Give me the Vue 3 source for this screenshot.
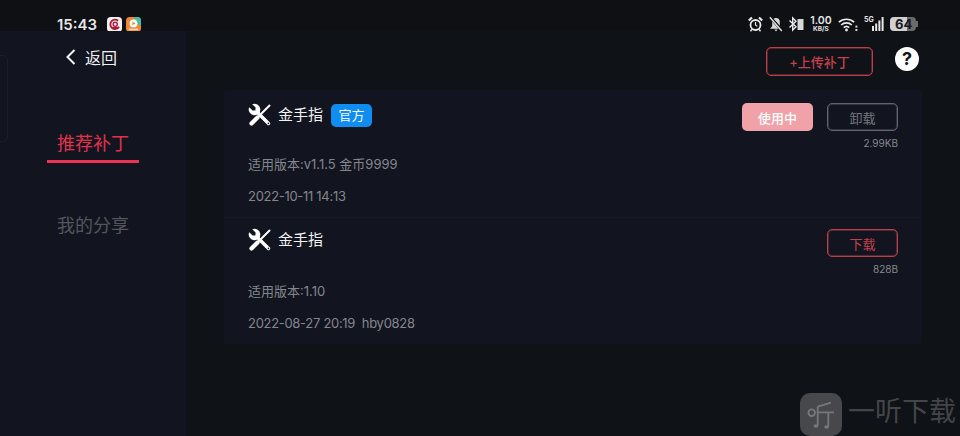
<template>
  <div class="screen">
    <header class="status-bar">
      <span class="clock">15:43</span>
      <svg class="app-icon" viewBox="0 0 16 16">
        <rect width="16" height="16" rx="4" fill="#f6eef0" />
        <path d="M11.800 4A5 5 0 1 0 12.800 10.500" fill="none" stroke="#a81c3c" stroke-width="2" />
        <circle cx="8.800" cy="7.800" r="2.200" fill="none" stroke="#a81c3c" stroke-width="1.500" />
        <path d="M5 11.200h6" stroke="#a81c3c" stroke-width="1.300" />
      </svg>
      <svg class="app-icon second" viewBox="0 0 16 16">
        <rect width="16" height="16" rx="4" fill="#ef8736" />
        <path d="M9 0h3a4 4 0 0 1 4 4v6L9 4z" fill="#3fbfa4" />
        <circle cx="8" cy="6.800" r="4.200" fill="#fff" />
        <path d="M6.800 4.800l3.400 2-3.400 2z" fill="#ef8736" />
        <rect x="3" y="12.400" width="10" height="1.800" fill="#fcd9b4" />
      </svg>
      <div class="status-right">
        <svg viewBox="0 0 15 16" width="15" height="16">
          <circle cx="7.500" cy="9" r="5" fill="none" stroke="#e8e8e8" stroke-width="1.800" />
          <path d="M7.500 6v3l1.800 1.400" fill="none" stroke="#e8e8e8" stroke-width="1.200" />
          <path d="M.8 4.500L4 1.500M14.200 4.500L11 1.500" stroke="#e8e8e8" stroke-width="2.200" />
          <path d="M3.800 13.500l-1.300 1.800M11.200 13.500l1.300 1.800" stroke="#e8e8e8" stroke-width="1.500" />
        </svg>
        <svg viewBox="0 0 14 16" width="14" height="16">
          <path d="M7 2a3.800 3.800 0 0 1 3.800 3.800v4.400L13 12.800H1l2.200-2.600V5.800A3.800 3.800 0 0 1 7 2z" fill="#d8d8d8" />
          <path d="M5.400 13.600h3.200L7 15.400z" fill="#d8d8d8" />
          <path d="M1.400 1.400l12 13.400" stroke="#0e1014" stroke-width="3" />
          <path d="M.8 1.200l12 13.800" stroke="#e8e8e8" stroke-width="1.300" />
        </svg>
        <svg viewBox="0 0 15 16" width="15" height="16">
          <path d="M.5 4.500L7 10.800 3.700 14V2L7 5.200.5 11.500" fill="none" stroke="#e8e8e8" stroke-width="1.400" />
          <rect x="8.500" y="3" width="6" height="11" fill="#d8d8d8" />
        </svg>
        <div class="speed">
          <span class="speed-num">1.00</span>
          <span class="speed-unit">KB/S</span>
        </div>
        <svg viewBox="0 0 20 16" width="20" height="16">
          <path d="M.8 6.200a11.500 11.500 0 0 1 15.400 0M3.200 9a7.800 7.800 0 0 1 10.600 0M5.800 11.600a4 4 0 0 1 5.400 0" fill="none" stroke="#ececec" stroke-width="1.700" />
          <circle cx="8.500" cy="14" r="1.400" fill="#ececec" />
          <rect x="17.400" y="9.600" width="2" height="2" fill="#d8d8d8" />
          <rect x="17.400" y="13" width="2" height="2" fill="#d8d8d8" />
        </svg>
        <div class="signal">
          <span class="five-g">5G</span>
          <svg viewBox="0 0 12 14" width="12" height="14">
            <rect x="0" y="9" width="2" height="5" fill="#e8e8e8" />
            <rect x="3.200" y="6.500" width="2" height="7.500" fill="#e8e8e8" />
            <rect x="6.400" y="3.500" width="2" height="10.500" fill="#e8e8e8" />
            <rect x="9.600" y="0" width="2" height="14" fill="#e8e8e8" />
          </svg>
        </div>
        <div class="battery">
          <span>64</span>
          <i class="battery-cap"></i>
        </div>
      </div>
    </header>

    <div class="body">
      <aside class="sidebar">
        <div class="back">
          <svg viewBox="0 0 12 18" width="12" height="18">
            <path d="M9.500 2L2.500 9l7 7" fill="none" stroke="#f2f2f2" stroke-width="2" />
          </svg>
          <span>返回</span>
        </div>
        <nav class="tabs">
          <div class="tab active">推荐补丁</div>
          <div class="tab">我的分享</div>
        </nav>
      </aside>

      <main class="main">
        <div class="toolbar">
          <button class="upload">+上传补丁</button>
          <span class="help">?</span>
        </div>

        <section class="list">
          <article v-for="item in patches" :key="item.date" class="patch">
            <div class="patch-info">
              <div class="patch-title">
                <svg class="tool-icon" viewBox="0 0 24 24" width="24" height="24">
                  <path d="M21.500 2.500L11 13" stroke="#fff" stroke-width="2" stroke-linecap="round" />
                  <path d="M9.500 14.500L3.500 20.500" stroke="#fff" stroke-width="4.200" stroke-linecap="round" />
                  <path d="M4.200 1.200L7.600 4.600 7.400 7.400 4.600 7.600 1.200 4.200A5.800 5.800 0 1 0 4.200 1.200z" fill="#fff" />
                  <path d="M9 9L20.500 20.500" stroke="#fff" stroke-width="3.400" stroke-linecap="round" />
                  <circle cx="20.400" cy="20.400" r=".8" fill="#12151f" />
                </svg>
                <span class="patch-name">金手指</span>
                <span v-if="item.official" class="badge">官方</span>
              </div>
              <p class="meta version">{{ item.version }}</p>
              <p class="meta date">{{ item.date }}</p>
            </div>
            <div class="patch-side">
              <div class="actions">
                <button v-for="btn in item.buttons" :key="btn.label" class="action" :class="btn.kind">{{ btn.label }}</button>
              </div>
              <span class="size">{{ item.size }}</span>
            </div>
          </article>
        </section>
      </main>
    </div>

    <div class="notch"></div>
    <div class="watermark">
      <svg class="wm-logo" viewBox="0 0 42 43" width="42" height="43">
        <rect width="42" height="43" rx="10" fill="#47484b" />
        <g fill="none" stroke="#77787c" stroke-width="1.800">
          <circle cx="11.700" cy="19.700" r="3.300" />
          <path d="M17.700 13.700L31 9.700M16.700 19.300H34M17.700 13.700V32M28.300 19.300V33" />
        </g>
        <ellipse cx="16" cy="33" rx="2.400" ry="1.800" fill="#77787c" />
        <ellipse cx="26.600" cy="34" rx="2.400" ry="1.800" fill="#77787c" />
      </svg>
      <span class="wm-text">一听下载</span>
    </div>
  </div>
</template>

<script setup>
const patches = [
  {
    official: true,
    version: '适用版本:v1.1.5 金币9999',
    date: '2022-10-11 14:13',
    size: '2.99KB',
    buttons: [
      { label: '使用中', kind: 'using' },
      { label: '卸载', kind: 'ghost' },
    ],
  },
  {
    official: false,
    version: '适用版本:1.10',
    date: '2022-08-27 20:19  hby0828',
    size: '828B',
    buttons: [{ label: '下载', kind: 'outline' }],
  },
]
</script>

<style>
body {
  margin: 0;
  background: #0f1216;
}
</style>

<style scoped>
* {
  box-sizing: border-box;
}

.screen {
  position: relative;
  width: 960px;
  height: 436px;
  overflow: hidden;
  background: #0f1216;
  font-family: Inter, "Noto Sans CJK SC", sans-serif;
  color: #fff;
}

.status-bar {
  height: 31px;
  padding: 17px 42px 0 57px;
  display: flex;
  align-items: center;
  background: #0e1014;
}

.clock {
  width: 40px;
  margin-right: 10px;
  font-size: 15px;
  font-weight: 600;
  color: #e6e6e6;
}

.app-icon {
  width: 15px;
  height: 15px;
  flex: none;
}

.app-icon.second {
  margin-left: 4px;
}

.status-right {
  margin-left: auto;
  display: flex;
  align-items: center;
  gap: 6px;
}

.status-right svg {
  flex: none;
}

.speed {
  width: 22px;
  display: flex;
  flex-direction: column;
  align-items: center;
  color: #e4e4e4;
  line-height: 1;
}

.speed-num {
  font-size: 10.5px;
  font-weight: 600;
}

.speed-unit {
  font-size: 6.5px;
  font-weight: 700;
}

.signal {
  position: relative;
  width: 20px;
  display: flex;
  justify-content: flex-end;
}

.five-g {
  position: absolute;
  left: 0;
  top: -1px;
  font-size: 7px;
  line-height: 8px;
  font-weight: 700;
  color: #e4e4e4;
}

.battery {
  position: relative;
  width: 26px;
  height: 14px;
  margin-right: 2px;
  padding-left: 5px;
  border-radius: 4px;
  background: linear-gradient(90deg, #d0d0d0 66%, #6a6a6a 66%);
  color: #17191d;
  font-size: 13px;
  font-weight: 700;
  line-height: 14px;
}

.battery-cap {
  position: absolute;
  right: -2px;
  top: 4px;
  width: 2px;
  height: 6px;
  background: #6a6a6a;
}

.body {
  display: flex;
  height: 405px;
}

.sidebar {
  width: 186px;
  background: #12151f;
  padding-top: 16px;
}

.back {
  display: flex;
  align-items: center;
  gap: 8px;
  padding-left: 65px;
  height: 20px;
  font-size: 16px;
  color: #f0f0f0;
}

.tabs {
  margin-top: 65px;
}

.tab {
  width: 92px;
  margin-left: 47px;
  font-size: 18px;
  line-height: 24px;
  text-align: center;
  color: #54565c;
}

.tab.active {
  height: 31px;
  margin-bottom: 51px;
  color: #e0324c;
  border-bottom: 3px solid #ee3350;
}

.main {
  flex: 1;
  padding: 0 38px;
}

.toolbar {
  height: 59px;
  padding-top: 16px;
  display: flex;
  align-items: flex-start;
  justify-content: flex-end;
}

.upload {
  width: 107px;
  height: 29px;
  padding: 0;
  border: 1px solid #bb3f4b;
  border-radius: 5px;
  box-shadow: inset 0 0 0 1px rgba(187, 63, 75, 0.4);
  background: transparent;
  color: #c4404e;
  font: inherit;
  font-size: 13px;
  font-weight: 500;
}

.help {
  width: 24px;
  height: 24px;
  margin: 0 3px 0 22px;
  border-radius: 50%;
  background: #fff;
  color: #15171b;
  font-size: 18px;
  font-weight: 700;
  line-height: 24px;
  text-align: center;
}

.list {
  height: 254px;
  background: #12151f;
  border-radius: 2px;
}

.patch {
  height: 127px;
  padding: 13px 24px 0;
  display: flex;
  justify-content: space-between;
}

.patch:first-child .patch-title {
  margin-top: -1px;
}

.patch + .patch {
  padding-top: 11px;
  border-top: 1px solid #161923;
}

.patch + .patch .patch-title {
  margin-top: -2px;
}

.patch + .patch .version {
  margin-top: 29px;
}

.patch-title {
  display: flex;
  align-items: center;
  height: 26px;
}

.tool-icon {
  margin-right: 6px;
}

.patch-name {
  margin-bottom: 3px;
  font-size: 15px;
  color: #f2f2f2;
}

.badge {
  width: 41px;
  height: 23px;
  margin-left: 8px;
  border-radius: 5px;
  background: #0f8df0;
  color: #f4faff;
  font-size: 13px;
  line-height: 23px;
  text-align: center;
}

.meta {
  margin: 0;
  font-size: 13px;
  line-height: 18px;
  color: #84868d;
  white-space: pre;
}

.version {
  margin-top: 27px;
}

.date {
  margin-top: 14px;
  letter-spacing: -0.3px;
}

.patch-side {
  display: flex;
  flex-direction: column;
  align-items: flex-end;
}

.actions {
  display: flex;
  gap: 14px;
}

.action {
  width: 71px;
  height: 28px;
  padding: 0;
  border-radius: 5px;
  background: transparent;
  font: inherit;
  font-size: 13px;
}

.using {
  border: none;
  background: #f1a2a8;
  color: #fff;
  font-weight: 500;
}

.ghost {
  border: 1px solid #5f6470;
  box-shadow: inset 0 0 0 1px rgba(95, 100, 112, 0.4);
  color: #74777f;
}

.outline {
  border: 1px solid #bb3f4b;
  box-shadow: inset 0 0 0 1px rgba(187, 63, 75, 0.4);
  color: #c4404e;
}

.size {
  margin-top: 5px;
  font-size: 10px;
  line-height: 15px;
  color: #85878e;
}

.notch {
  position: absolute;
  left: -6px;
  top: 55px;
  width: 14px;
  height: 87px;
  border: 1px solid #1b1e26;
  border-radius: 5px;
}

.watermark {
  position: absolute;
  left: 800px;
  top: 393px;
  display: flex;
  gap: 6px;
  color: #434549;
}

.wm-text {
  margin-top: 2px;
  font-size: 27px;
  line-height: 34px;
}
</style>
